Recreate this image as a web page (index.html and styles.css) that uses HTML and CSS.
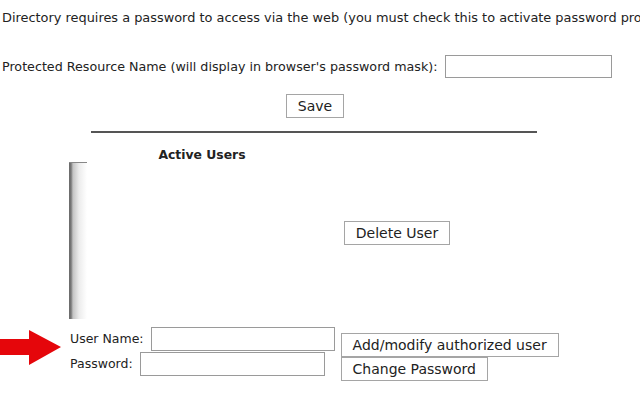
FILE: index.html
```html
<!DOCTYPE html>
<html lang="en">
<head>
  <meta charset="UTF-8" />
  <title>Password Protect Directory</title>
  <link rel="stylesheet" href="styles.css">
</head>
<body>

  <div class="page">
    <div class="intro-wrap">
      <p class="intro">Directory requires a password to access via the web (you must check this to activate password protection)</p>
    </div>

    <div class="resource">
      <label for="realm">Protected Resource Name (will display in browser's password mask):</label>
      <input type="text" id="realm" class="field realm" />
    </div>

    <div class="save-row">
      <button class="btn">Save</button>
    </div>

    <hr class="divider" />

    <div class="users">
      <div class="users-list">
        <h3>Active Users</h3>
        <div class="listbox"></div>
      </div>
      <div class="users-actions">
        <button class="btn">Delete User</button>
      </div>
    </div>

    <div class="user-form">
      <div class="arrow">
        <svg width="62" height="36" viewBox="0 0 62 36">
          <polygon points="0,9 29,9 29,0 61,17 29,35 29,25 0,25" fill="#e5060b" />
        </svg>
      </div>
      <div class="fields">
        <div class="row">
          <label for="uname">User Name:</label>
          <input type="text" id="uname" class="field uname" />
        </div>
        <div class="row">
          <label for="upass">Password:</label>
          <input type="password" id="upass" class="field upass" />
        </div>
      </div>
      <div class="form-buttons">
        <button class="btn">Add/modify authorized user</button>
        <button class="btn">Change Password</button>
      </div>
    </div>
  </div>

</body>
</html>
```

FILE: styles.css
```css
body {
  margin: 0;
  background-color: #fff;
  color: #222;
  font-family: "DejaVu Sans", Verdana, sans-serif;
  font-size: 12.7px;
  overflow: hidden;
}

.page {
  width: 630px;
}

/* the sentence runs past the window edge, as in the original */
.intro-wrap {
  width: 640px;
  overflow: hidden;
}

.intro {
  margin: 0;
  padding: 10px 0 0 2px;
  white-space: nowrap;
  font-size: 12.9px;
  line-height: 16px;
  height: 16px;
}

.resource {
  display: flex;
  align-items: center;
  padding: 29px 0 0 2px;
}

.resource label {
  margin-right: 7px;
}

.field {
  border: 1px solid #9a9a9a;
  padding: 0;
  box-sizing: border-box;
  background: #fff;
}

.realm {
  width: 167px;
  height: 23px;
}

.save-row {
  text-align: center;
  margin-top: 16px;
}

.btn {
  font-family: "DejaVu Sans", Verdana, sans-serif;
  font-size: 14px;
  color: #222;
  background: #fff;
  border: 1px solid #a5a5a5;
  padding: 0 11px;
  height: 24px;
  line-height: 20px;
}

.divider {
  width: 446px;
  margin: 13px 0 0 91px;
  border: none;
  border-top: 2px solid #555;
}

.users {
  display: flex;
  margin-left: 69px;
}

.users-list {
  width: 266px;
}

.users-list h3 {
  margin: 14px 0 0 0;
  font-size: 12.4px;
  line-height: 15px;
  text-align: center;
}

.listbox {
  height: 156px;
  width: 18px;
  border-top: 1px solid #888;
  background: linear-gradient(to right, #6a6a6a 0, #777 2px, #c4c4c4 4px, #ececec 10px, #fff 18px);
}

.users-actions {
  padding: 88px 0 0 9px;
}

.users-actions .btn {
  width: 106px;
  padding: 0;
}

.user-form {
  display: flex;
  margin-top: 7px;
}

.arrow {
  width: 70px;
  padding-top: 4px;
}

.fields .row {
  display: flex;
  align-items: center;
  height: 25px;
  font-size: 12.5px;
}

.fields label {
  margin-right: 7px;
}

.uname {
  width: 184px;
  height: 24px;
}

.upass {
  width: 185px;
  height: 24px;
}

.form-buttons {
  display: flex;
  flex-direction: column;
  align-items: flex-start;
  margin: 7px 0 0 6px;
}
```
